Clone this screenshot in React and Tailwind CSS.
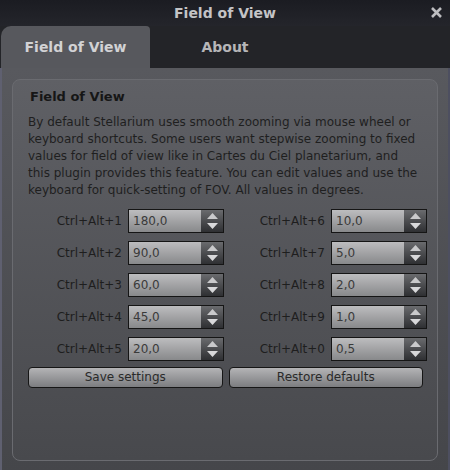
const rows = [
  ['Ctrl+Alt+1', '180,0', 'Ctrl+Alt+6', '10,0'],
  ['Ctrl+Alt+2', '90,0', 'Ctrl+Alt+7', '5,0'],
  ['Ctrl+Alt+3', '60,0', 'Ctrl+Alt+8', '2,0'],
  ['Ctrl+Alt+4', '45,0', 'Ctrl+Alt+9', '1,0'],
  ['Ctrl+Alt+5', '20,0', 'Ctrl+Alt+0', '0,5'],
]

function Spin({ label, value }) {
  return (
    <div className="flex items-center gap-[6px]">
      <span className="w-[94px] text-right text-[12px] text-[#1e1e1e]">{label}</span>
      <div className="flex h-[24px] w-[96px] border border-[#151515] bg-gradient-to-b from-[#bdbdbf] to-[#88898b]">
        <span className="flex-1 pl-[4px] text-[12px] leading-[22px] text-[#3a3a3a]">{value}</span>
        <div className="flex w-[22px] flex-col items-center justify-between bg-gradient-to-b from-[#6a6b6e] to-[#2f3033] py-[3px]">
          <svg width="11" height="6" viewBox="0 0 11 6"><path d="M5.5 0L11 6H0z" fill="#c9c9cb" /></svg>
          <svg width="11" height="6" viewBox="0 0 11 6"><path d="M0 0H11L5.5 6z" fill="#d8d8da" /></svg>
        </div>
      </div>
    </div>
  )
}

export default function App() {
  return (
    <div className="flex h-[470px] w-[450px] flex-col bg-[#222328] font-['DejaVu_Sans',sans-serif]">
      <div className="relative flex h-[26px] items-center justify-center bg-gradient-to-b from-[#1b1c22] to-[#24252b]">
        <span className="text-[14px] font-bold text-[#c4c4c6]">Field of View</span>
        <svg className="absolute right-[7px] top-[6px]" width="13" height="13" viewBox="0 0 13 13">
          <path d="M2 2L11 11M11 2L2 11" stroke="#bdbdc0" strokeWidth="2.6" />
        </svg>
      </div>
      <div className="flex h-[42px] items-end bg-[#232428]">
        <div className="ml-px flex h-[42px] w-[149px] items-center justify-center rounded-tl-[10px] rounded-tr-[4px] bg-[#57585d] text-[14px] font-bold text-[#d2d2d4]">
          Field of View
        </div>
        <div className="flex h-[42px] w-[150px] items-center justify-center text-[14px] font-bold text-[#b6b6b8]">
          About
        </div>
      </div>
      <div className="flex flex-1 border-l-2 border-l-[#5f6070] border-r-2 border-r-[#4d4f60] bg-gradient-to-b from-[#58595e] to-[#45464a] px-[10px] pt-[11px] pb-[9px]">
        <div className="flex flex-1 flex-col rounded-[8px] border border-[#6a6b70] bg-gradient-to-b from-[#5f6065] to-[#48494d] pl-[15px] pr-[10px] pt-[7px]">
          <h2 className="pl-[2px] text-[13px] font-bold text-[#161616]">Field of View</h2>
          <p className="mt-[7px] whitespace-nowrap text-[12px] leading-[17px] text-[#1f1f1f]">
            By default Stellarium uses smooth zooming via mouse wheel or<br />
            keyboard shortcuts. Some users want stepwise zooming to fixed<br />
            values for field of view like in Cartes du Ciel planetarium, and<br />
            this plugin provides this feature. You can edit values and use the<br />
            keyboard for quick-setting of FOV. All values in degrees.
          </p>
          <div className="mt-[10px] flex flex-col gap-[8px]">
            {rows.map(r => (
              <div key={r[0]} className="flex gap-[7px]">
                <Spin label={r[0]} value={r[1]} />
                <Spin label={r[2]} value={r[3]} />
              </div>
            ))}
          </div>
          <div className="mt-[6px] flex gap-[6px] pr-[4px]">
            {['Save settings', 'Restore defaults'].map(t => (
              <button key={t} type="button" className="h-[21px] flex-1 rounded-[4px] border border-[#161616] bg-gradient-to-b from-[#b4b4b6] to-[#7c7d80] text-[12px] text-[#2a2a2a]">
                {t}
              </button>
            ))}
          </div>
        </div>
      </div>
    </div>
  )
}
